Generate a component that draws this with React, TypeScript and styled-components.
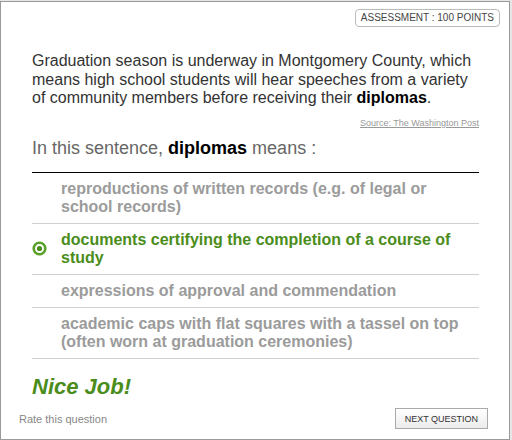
import React from 'react';
import styled, { createGlobalStyle } from 'styled-components';

const GlobalStyle = createGlobalStyle`
  html, body {
    margin: 0;
    padding: 0;
    background: #e6e6e6;
  }
  body {
    font-family: 'Liberation Sans', Arial, sans-serif;
  }
`;

const Panel = styled.div`
  box-sizing: border-box;
  width: 510px;
  height: 439px;
  margin-top: 1px;
  background: #fff;
  border: 1px solid #9a9a9a;
  display: flex;
  flex-direction: column;
  padding: 7px 10px 10px 18px;
`;

const TopBar = styled.div`
  display: flex;
  justify-content: flex-end;
`;

const Badge = styled.span`
  font-size: 10px;
  color: #444;
  border: 1px solid #bbb;
  border-radius: 4px;
  padding: 2px 5px 2px 5px;
  margin-right: -1px;
  line-height: 12px;
`;

const Body = styled.div`
  padding: 0 20px 0 13px;
`;

const Passage = styled.p`
  margin: 25px 0 0;
  font-size: 16px;
  line-height: 18.5px;
  color: #333;

  b {
    color: #000;
  }
`;

const Source = styled.div`
  text-align: right;
  margin-top: 4px;

  a {
    font-size: 9px;
    color: #999;
    text-decoration: underline;
  }
`;

const Prompt = styled.div`
  margin-top: 8px;
  font-size: 18px;
  color: #666;
  padding-bottom: 13px;
  border-bottom: 1px solid #000;

  b {
    color: #000;
  }
`;

const Options = styled.ul`
  list-style: none;
  margin: 0;
  padding: 0;
`;

const Option = styled.li<{ $selected?: boolean }>`
  display: flex;
  align-items: center;
  padding: 7px 10px 7px 0;
  border-bottom: 1px solid #cfcfcf;
  font-size: 16px;
  line-height: 18px;
  font-weight: bold;
  color: ${(p) => (p.$selected ? '#4b8d1b' : '#9b9b9b')};
`;

const Marker = styled.span`
  flex: 0 0 29px;
  display: flex;
  align-items: center;
`;

const Result = styled.div`
  margin-top: 15px;
  font-size: 22px;
  font-weight: bold;
  font-style: italic;
  color: #4b8d1b;
`;

const Footer = styled.div`
  margin-top: auto;
  display: flex;
  justify-content: space-between;
  align-items: center;
`;

const Rate = styled.span`
  font-size: 11px;
  color: #888;
`;

const NextButton = styled.button`
  font-family: 'Liberation Sans', Arial, sans-serif;
  font-size: 9px;
  color: #333;
  height: 21px;
  padding: 0 9px;
  margin-right: 11px;
  border: 1px solid #aaa;
  border-radius: 0;
  background: linear-gradient(#ffffff, #ececec);
`;

const options = [
  { text: 'reproductions of written records (e.g. of legal or school records)' },
  { text: 'documents certifying the completion of a course of study', selected: true },
  { text: 'expressions of approval and commendation' },
  { text: 'academic caps with flat squares with a tassel on top (often worn at graduation ceremonies)' }
];

function RadioOn() {
  return (
    <svg width='15' height='15' viewBox='0 0 15 15'>
      <circle cx='7.5' cy='7.5' r='5.8' fill='none' stroke='#5ba22a' strokeWidth='2.6' />
      <circle cx='7.5' cy='7.5' r='2.6' fill='#4b8d1b' />
    </svg>
  );
}

export default function App() {
  return (
    <>
      <GlobalStyle />
      <Panel>
        <TopBar>
          <Badge>ASSESSMENT : 100 POINTS</Badge>
        </TopBar>
        <Body>
          <Passage>
            Graduation season is underway in Montgomery County, which means high school students will
            hear speeches from a variety of community members before receiving their <b>diplomas</b>.
          </Passage>
          <Source>
            <a>Source: The Washington Post</a>
          </Source>
          <Prompt>
            In this sentence, <b>diplomas</b> means :
          </Prompt>
          <Options>
            {options.map((o, i) => (
              <Option key={i} $selected={o.selected}>
                <Marker>{o.selected && <RadioOn />}</Marker>
                <span>{o.text}</span>
              </Option>
            ))}
          </Options>
          <Result>Nice Job!</Result>
        </Body>
        <Footer>
          <Rate>Rate this question</Rate>
          <NextButton>NEXT QUESTION</NextButton>
        </Footer>
      </Panel>
    </>
  );
}
